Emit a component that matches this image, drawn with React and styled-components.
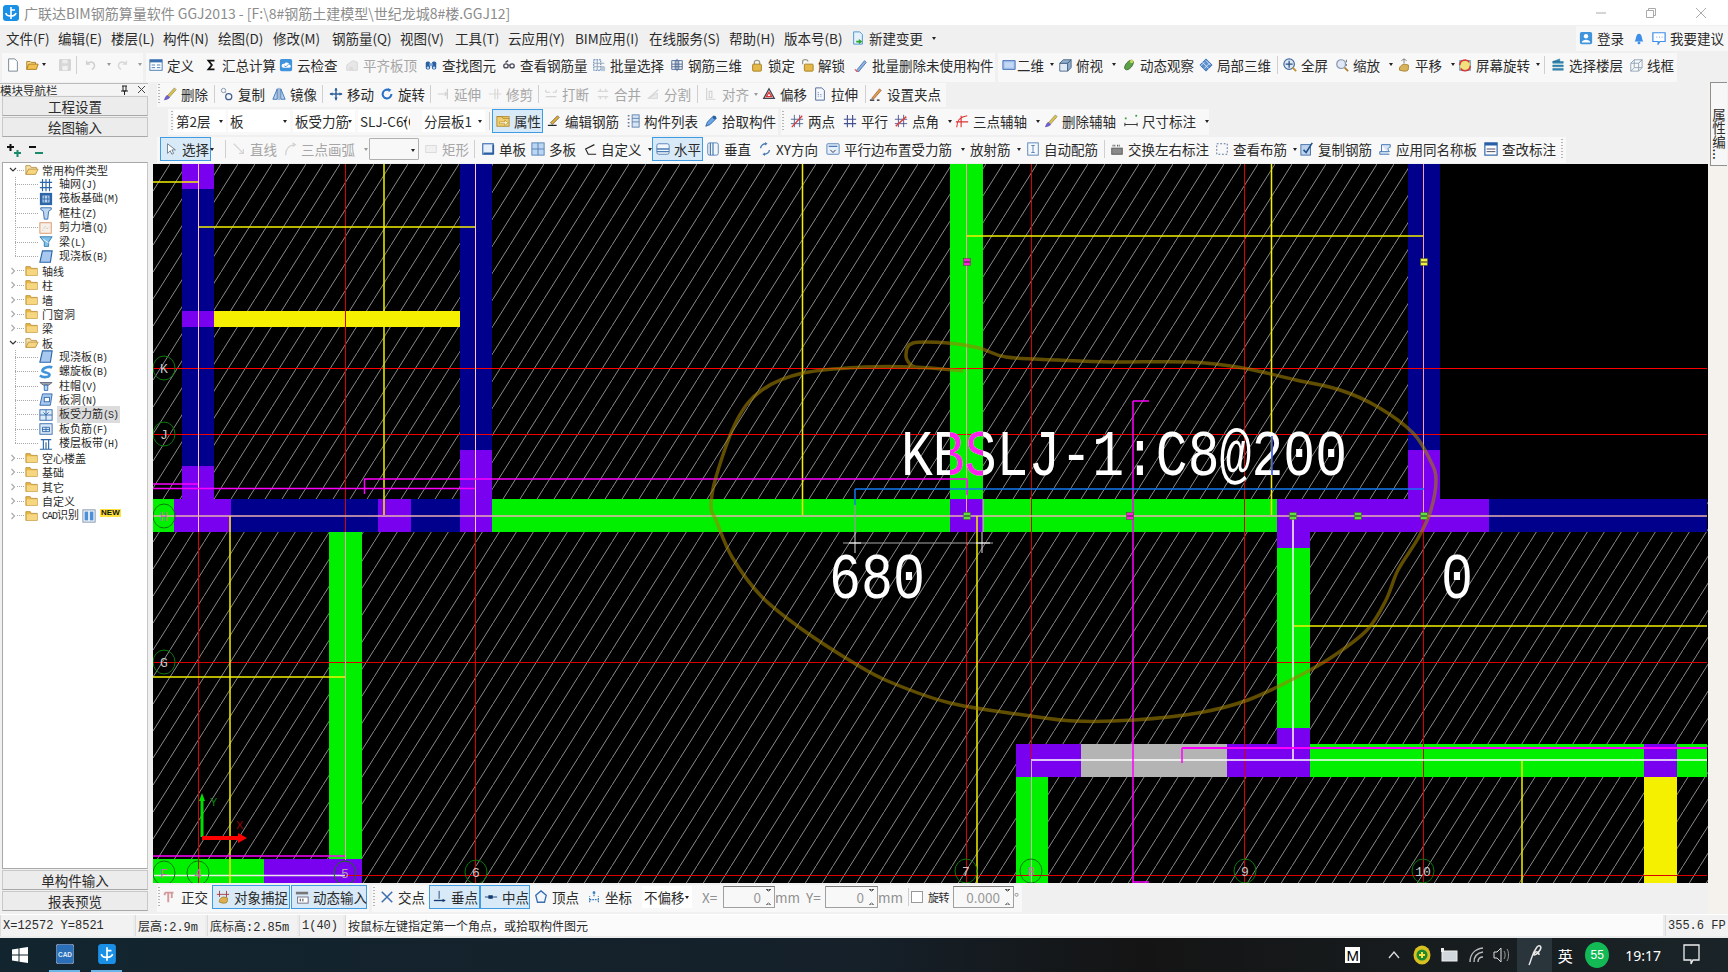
import React from "react";
import styled, { createGlobalStyle } from "styled-components";

const GlobalStyle = createGlobalStyle`
    html, body {
        margin: 0;
        padding: 0;
        background: #f0f0f0;
        overflow: hidden;
    }
    * {
        box-sizing: border-box;
    }
`;

// small bitmap-like toolbar icons, all on a 16 grid
const B = "#3a6fb0";
const LB = "#bcd6f2";
const ICONS = {
    new: <path d="M3 1h7l3 3v11H3z" fill="#fff" stroke="#6f7d8c" />,
    open: (<><path d="M2 13V4h4l1 1h5v2" fill="#f7dc8c" stroke="#a87818" /><path d="M2 13l2-6h11l-2 6z" fill="#f0c050" stroke="#a87818" /></>),
    save: (<><rect x="2" y="2" width="12" height="12" fill="#c4c4c4" stroke="#aaa" /><rect x="5" y="2" width="6" height="4" fill="#e6e6e6" /><rect x="5" y="9" width="6" height="5" fill="#eee" /></>),
    undo: <path d="M3 3v4h4M3 7c2-3 8-4 9 1 .4 2-1 4-3 5" fill="none" stroke="#b5b5b5" strokeWidth="1.6" />,
    redo: <path d="M13 3v4H9M13 7c-2-3-8-4-9 1-.4 2 1 4 3 5" fill="none" stroke="#c4c4c4" strokeWidth="1.6" />,
    define: (<><rect x="1" y="2" width="14" height="12" fill="#fff" stroke={B} /><rect x="1" y="2" width="14" height="3" fill={B} /><path d="M3 8h4M3 11h4M9 8h4M9 11h4" stroke={B} /></>),
    sigma: <path d="M12 3H5l4 5-4 5h7" fill="none" stroke="#111" strokeWidth="2" />,
    cloud: (<><rect x="1" y="1" width="14" height="14" rx="2" fill="#3f94dc" /><path d="M3 9c0-2 2-3 3-2 1-3 6-2 6 1 2 0 2 3 0 3H5c-1 0-2-1-2-2z" fill="#fff" /><path d="M6 9l2 1 3-3" fill="none" stroke="#3f94dc" /></>),
    align: (<><path d="M2 14V8l7-5 5 2v9z" fill="#ddd" stroke="#bbb" /><path d="M5 14v-4h4v4" fill="#c8c8c8" /></>),
    find: (<><rect x="2" y="4" width="5" height="9" rx="2" fill="#2c5fa0" /><rect x="9" y="4" width="5" height="9" rx="2" fill="#2c5fa0" /><rect x="6" y="6" width="4" height="3" fill="#7aa6d8" /><circle cx="4.5" cy="11" r="1.4" fill={LB} /><circle cx="11.5" cy="11" r="1.4" fill={LB} /></>),
    rebar: <path d="M2 9c0-3 5-3 5 0s-5 3-5 0zM9 9c0-3 5-3 5 0s-5 3-5 0M7 8l2 0M4 5l3-2" fill="none" stroke="#445" strokeWidth="1.4" />,
    batch: (<><rect x="2" y="2" width="8" height="12" fill="none" stroke={B} strokeDasharray="2 1" /><path d="M2 6h12M2 10h12M6 2v12" stroke="#8d9fb5" /><rect x="10" y="10" width="5" height="5" fill="#b9c6d8" /></>),
    r3d: <path d="M2 3h12v10H2zM2 7h12M2 10h12M6 3v10M10 3v10M8 1v14" fill="none" stroke="#43608f" />,
    lock: (<><path d="M5 8V5c0-3 6-3 6 0v3" fill="none" stroke="#998" strokeWidth="1.4" /><rect x="3" y="7" width="10" height="8" rx="1" fill="#e5b84a" stroke="#a07a1c" /></>),
    unlock: (<><path d="M3 7V4c0-3 6-3 6 0" fill="none" stroke="#998" strokeWidth="1.4" /><rect x="5" y="7" width="10" height="8" rx="1" fill="#e5b84a" stroke="#a07a1c" /></>),
    wand: (<><path d="M3 14l9-11 2 2-9 11z" fill="#8db3e6" stroke="#4a72a8" /><path d="M1 13l3 3" stroke="#d55" strokeWidth="1.4" /></>),
    plane: (<><path d="M1 3h14v10H1z" fill="#a8c6f0" stroke="#3a64b0" /><path d="M3 5h10v6H3z" fill="#c4d8f6" /></>),
    box: (<><path d="M2 6h9v9H2z" fill="#dfeaf6" stroke="#46617f" /><path d="M2 6l4-4h9l-4 4zM11 6l4-4v9l-4 4z" fill="#90b0d2" stroke="#46617f" /></>),
    orbit: (<><ellipse cx="8" cy="8" rx="3.5" ry="6.5" transform="rotate(40 8 8)" fill="#5ca04a" stroke="#3a7030" /><circle cx="11" cy="4" r="2" fill="#c5d850" /></>),
    cube: (<><path d="M8 1l7 7-7 7-7-7z" fill="#5b8fcf" stroke="#3a6fb0" /><path d="M4 5l7 7M8 3l5 5M2 9l4-4M6 12l6-6" stroke="#dfeaf6" /></>),
    full: (<><circle cx="7" cy="7" r="6" fill="#dfe8f4" stroke="#426b9f" strokeWidth="1.4" /><path d="M7 3v8M3 7h8" stroke="#2c4f80" strokeWidth="1.4" /><path d="M11 11l4 4" stroke="#c09030" strokeWidth="2" /></>),
    zoom: (<><circle cx="7" cy="7" r="5" fill="#dfe8f4" stroke="#8898ad" strokeWidth="1.4" /><path d="M11 11l4 4" stroke="#a88030" strokeWidth="2" /><path d="M13 2v3M13 7v2" stroke="#555" /></>),
    pan: (<><path d="M3 14c-1-4 2-6 5-7l5 1v4c0 3-2 3-5 3z" fill="#d9b35c" stroke="#a47f2e" /><path d="M8 1v5M5 3l3-2 3 2" fill="none" stroke="#777" /></>),
    rotate: (<><rect x="2" y="3" width="12" height="11" fill="#f3e17c" stroke="#4a90c8" /><path d="M2 8a6 6 0 0 1 11-3M14 9a6 6 0 0 1-11 3" fill="none" stroke="#d33" strokeWidth="1.6" /></>),
    floors: <path d="M2 4l8-3v3zM2 4h12v2H2zM2 8h12v2H2zM2 12h12v2H2z" fill="#2f8ab8" stroke="#1f6a8c" strokeWidth=".5" />,
    wire: <path d="M2 6h9v9H2zM2 6l4-4h9l-4 4M11 6l4-4v9l-4 4M6 2v9l-4 4M6 11h9" fill="none" stroke="#8da0b3" />,
    del: (<><path d="M5 10L13 1l2 2-8 9z" fill="#e0c040" stroke="#997" /><path d="M1 15c1-3 2-5 4-6l3 3c-2 2-4 3-7 3z" fill="#6d60c8" /></>),
    copy: (<><circle cx="4" cy="4" r="2.5" fill="none" stroke="#7d8ea3" /><circle cx="10" cy="11" r="3.5" fill="none" stroke="#43608f" strokeWidth="1.4" /><path d="M6 6l2 2" stroke="#888" strokeDasharray="1 1" /></>),
    mirror: <path d="M1 14L6 2v12zM15 14L10 2v12zM8 1v14" fill="#b7cfee" stroke={B} />,
    move: (<><path d="M8 1v14M1 8h14" stroke="#2c5f9c" strokeWidth="1.6" /><path d="M8 1l-2 3h4zM8 15l-2-3h4zM1 8l3-2v4zM15 8l-3-2v4z" fill="#2c5f9c" /></>),
    rot: (<><path d="M13 8a5 5 0 1 1-3-4.5" fill="none" stroke="#2b6fc6" strokeWidth="2.4" /><path d="M9 1l4 2-3 3z" fill="#2b6fc6" /></>),
    extend: <path d="M2 8h8M13 2v12M10 6l2 2-2 2" fill="none" stroke="#b5b5b5" strokeWidth="1.4" />,
    trim: <path d="M1 8h14M8 2v12M11 2v12" fill="none" stroke="#c4c4c4" strokeWidth="1.4" />,
    break: <path d="M2 6h5M10 6h4M2 11h12M2 6V3M14 6V3" fill="none" stroke="#bbb" strokeWidth="1.4" />,
    merge: <path d="M2 5h12M2 11h12M5 2v3M11 2v3M5 11v3M11 11v3" fill="none" stroke="#c4c4c4" strokeWidth="1.6" />,
    split: (<><path d="M2 13h11V7z" fill="#e4e4e4" stroke="#bbb" /><path d="M4 12l10-9" stroke="#bbb" strokeWidth="1.4" /></>),
    alignL: <path d="M3 1v14M3 14h10M6 5h3v7H6z" fill="none" stroke="#bbb" strokeWidth="1.3" />,
    offset: (<><path d="M2 13L8 2l6 11z" fill="none" stroke="#445" strokeWidth="1.5" /><path d="M5 11l3-5 3 5z" fill="none" stroke="#d33" strokeWidth="1.5" /></>),
    stretch: (<><path d="M3 1h7l3 3v11H3z" fill="#f5f8fc" stroke="#43608f" /><path d="M6 6v6M9 8v4" stroke="#43608f" strokeDasharray="1 1" /></>),
    gripset: (<><path d="M1 15h5M9 15h3" stroke="#111" strokeWidth="1.4" /><path d="M3 13L12 2l2 2-8 9z" fill="#dda040" stroke="#944" strokeWidth=".7" /></>),
    prop: (<><rect x="1" y="3" width="14" height="11" fill="#f0cd70" stroke="#b08a30" /><path d="M1 3h6l1 2h7" fill="none" stroke="#b08a30" /><path d="M4 9h6V7l4 3-4 3v-2H4z" fill="#fff6d0" stroke="#a07a1c" strokeWidth=".6" /></>),
    edit: (<><path d="M4 10L12 2l2 2-8 8z" fill="#e0b030" stroke="#765" /><path d="M1 13h10" stroke="#222" strokeWidth="1.4" /></>),
    list: (<><path d="M2 2h3M2 6h3M2 10h3M2 14h3" stroke="#6a7b90" strokeWidth="1.5" strokeDasharray="2 1" /><rect x="7" y="1" width="8" height="14" fill="#d6e4f4" stroke="#5a7fa8" /><path d="M7 5h8M7 9h8" stroke="#5a7fa8" /></>),
    pick: (<><path d="M2 14l2-5 7-7 3 3-7 7z" fill="#6aa6e8" stroke="#2c5fa0" /><circle cx="12" cy="4" r="2" fill="#2c5fa0" /></>),
    two: (<><path d="M1 6h14M1 11h14M5 1v14M11 1v14" stroke="#43608f" /><path d="M2 15L14 2" stroke="#d33" strokeWidth="1.4" /></>),
    para: <path d="M1 6h14M1 11h14M5 1v14M11 1v14" stroke="#43508f" strokeWidth="1.3" />,
    ptang: (<><path d="M1 6h14M1 11h14M5 1v14M11 1v14" stroke="#43508f" /><path d="M2 14L14 3" stroke="#e04040" strokeWidth="1.6" /></>),
    arc: <path d="M2 15C2 7 6 3 14 2M1 9h14M7 2v13" fill="none" stroke="#d33" strokeWidth="1.3" />,
    dim: (<><rect x="1" y="4" width="2" height="2" fill="#393" /><rect x="13" y="1" width="2" height="2" fill="#393" /><path d="M1 12h14M1 10v4M15 10v4" stroke="#222" /></>),
    select: <path d="M4 2v11l3-3 2 4 2-1-2-4h4z" fill="#fff" stroke="#678" />,
    line: <path d="M2 2l11 11M13 8v5H8" fill="none" stroke="#bbb" strokeWidth="1.3" />,
    arcLine: <path d="M3 15C3 8 6 4 13 3M11 1l3 2-3 2" fill="none" stroke="#bbb" strokeWidth="1.5" />,
    rect: <rect x="2" y="4" width="12" height="8" fill="#eee" stroke="#c4c4c4" />,
    slab: (<><rect x="2" y="2" width="12" height="12" fill="#e6f0fb" stroke={B} strokeWidth="1.3" /><path d="M3 13h11V3" stroke="#2c5fa0" strokeWidth="2" fill="none" /></>),
    multi: (<><rect x="1" y="1" width="14" height="14" fill={LB} stroke="#4d7cb4" /><path d="M8 1v14M1 8h14" stroke="#4d7cb4" /></>),
    custom: <path d="M13 3L3 8l3 6h9" fill="none" stroke="#222" strokeWidth="1.3" />,
    horiz: (<><rect x="1" y="2" width="14" height="12" rx="2" fill="#f2f7fc" stroke="#4d7cb4" /><path d="M1 8h14M1 11h14" stroke="#4d7cb4" strokeWidth="1.6" /></>),
    vert: (<><rect x="2" y="1" width="12" height="14" rx="2" fill="#f2f7fc" stroke="#4d7cb4" /><path d="M5 1v14M8 1v14" stroke="#4d7cb4" strokeWidth="1.4" /></>),
    xy: (<><path d="M3 7c0-3 3-5 6-5M13 9c0 3-3 5-6 5" fill="none" stroke="#4d7cb4" strokeWidth="1.6" /><path d="M8 0l3 2-3 2zM8 12l-3 2 3 2z" fill="#4d7cb4" /></>),
    parabar: (<><rect x="1" y="2" width="14" height="12" rx="1" fill="#e6f0fb" stroke="#4d7cb4" /><path d="M3 5h10" stroke="#4d7cb4" strokeWidth="1.5" /><path d="M5 9l3 3 3-3" fill="none" stroke="#223" /></>),
    auto: (<><rect x="2" y="1" width="12" height="14" fill="#f5f9fe" stroke="#4d7cb4" /><path d="M6 4h4M8 4v8M6 12h4" stroke="#4d7cb4" /></>),
    swap: (<><rect x="2" y="7" width="12" height="7" fill="#8a8a8a" stroke="#555" /><path d="M3 4h3M8 4h3" stroke="#444" strokeWidth="2" strokeDasharray="1 1" /></>),
    check: <rect x="2" y="2" width="12" height="12" fill="none" stroke="#43608f" strokeDasharray="2 2" />,
    copybar: (<><rect x="1" y="3" width="11" height="12" fill="#bdd2ec" stroke="#3d6ba4" /><path d="M4 9l3 3 7-11" fill="none" stroke="#1f4f8a" strokeWidth="1.8" /></>),
    same: <path d="M4 3h10v3c-3 0-3 3-1 5H2v3h11M4 3v8" fill="#d6e4f4" stroke="#3a6fb0" />,
    annot: (<><rect x="1" y="1" width="14" height="14" fill="#fff" stroke="#2a5fa8" strokeWidth="1.3" /><rect x="1" y="1" width="14" height="3" fill="#2a5fa8" /><path d="M3 8h10M3 11h10" stroke="#335" /></>),
    ortho: <path d="M2 3h10M6 3v11M10 3v6M2 3v3" fill="none" stroke="#d49a9a" strokeWidth="2.2" />,
    snap: (<><path d="M4 1v7M12 1v7M1 5h14" stroke="#a33" /><path d="M4 14c-1-3 2-6 5-6l4 1v3c0 3-2 3-5 3z" fill="#dcb050" stroke="#a47f2e" /></>),
    dyn: (<><rect x="1" y="2" width="14" height="3" fill="#777" /><rect x="3" y="8" width="12" height="7" fill="#fff" stroke="#667" /><path d="M6 10v3M9 10v3" stroke="#223" /></>),
    cross: <path d="M2 2l12 12M14 2L2 14" stroke="#3a6fb0" strokeWidth="1.7" />,
    perp: (<><path d="M1 12h13" stroke="#123a70" strokeWidth="1.5" /><path d="M7 1v9" stroke="#123a70" /><path d="M11 10l3 2-3 2z" fill="#123a70" /></>),
    mid: (<><path d="M1 8h14" stroke="#123a70" /><rect x="5" y="6" width="5" height="4" fill="#123a70" /></>),
    vertex: <path d="M8 1l6 5-2 8H4L2 6z" fill="#f2f7fc" stroke="#3a6fb0" strokeWidth="1.5" />,
    coord: (<><path d="M3 14V7M13 14V7M3 11h10M8 2v6" stroke="#3a7fc0" strokeWidth="1.4" strokeDasharray="2 1" /><circle cx="8" cy="3" r="1.6" fill="#3a7fc0" /></>),
    change: (<><path d="M3 1h7l3 3v11H3z" fill="#e5f2fb" stroke="#3f8fd0" /><path d="M9 9l4 3-4 3zM6 11h3v2H6z" fill="#2da52d" /></>),
    user: (<><rect x="1" y="1" width="14" height="14" rx="2" fill="#3f94dc" /><circle cx="8" cy="6" r="2.5" fill="#fff" /><path d="M3 13c1-4 9-4 10 0z" fill="#fff" /></>),
    bell: (<><path d="M3 12c2-2 1-9 5-9s3 7 5 9z" fill="#3f8ee8" /><circle cx="8" cy="13.6" r="1.6" fill="#3f8ee8" /></>),
    chat: (<><path d="M1 2h14v10H9l-2 3v-3H1z" fill="#fff" stroke="#3f8ee8" strokeWidth="1.4" /><path d="M5 7h1M8 7h1M11 7h1" stroke="#3f8ee8" /></>),
    folder: (<><path d="M1 3h5l1 2h7v8H1z" fill="#e8b840" stroke="#b89040" /><path d="M2 6h12v7H2z" fill="#f6d680" /></>),
    folderOpen: (<><path d="M1 13V3h5l1 2h6v2" fill="#f5e3ac" stroke="#b89040" /><path d="M1 13l3-6h11l-3 6z" fill="#f6d680" stroke="#b89040" /></>),
    grid: <path d="M1 5h14M1 11h14M4 1v14M8 1v14M12 1v14" stroke="#2d66a8" strokeWidth="1.3" />,
    raft: (<><rect x="1" y="1" width="14" height="14" fill="#2d66a8" /><rect x="4" y="4" width="8" height="8" fill="#bdd2ec" /><path d="M6 4v8M10 4v8M4 8h8" stroke="#2d66a8" /></>),
    column: <path d="M2 2h12v2l-3 2-1 9H6L5 6 2 4z" fill="#bcd6f2" stroke="#2d66a8" />,
    wall: (<><rect x="1" y="2" width="13" height="12" fill="#f7f0e8" stroke="#d89060" /><path d="M4 11l3-5 2 3 3-2" stroke="#bbb" fill="none" strokeDasharray="1 1" /></>),
    beam: (<><path d="M1 2h14l-4 6v5H6V8z" fill="#7ec0e8" stroke="#2d76a8" /><path d="M5 5l6 4" stroke="#fff" /></>),
    cast: <path d="M4 1h11l-2 13H1z" fill="#a8c8f0" stroke="#2d66a8" strokeWidth="1.3" />,
    spiral: <path d="M1 12c4 3 11 2 11-1S3 9 4 6s8-5 11-3" fill="none" stroke="#3f94dc" strokeWidth="3" />,
    cap: (<><path d="M1 4h14l-4 3H5z" fill="#9aa5b2" stroke="#667" /><path d="M6 7h4v6H6z" fill="#bcd6f2" stroke="#2d66a8" /></>),
    hole: (<><path d="M4 1h11l-2 13H1z" fill="#a8c8f0" stroke="#2d66a8" /><rect x="6" y="5" width="6" height="5" fill="#fff" stroke="#2d66a8" /></>),
    barS: (<><rect x="1" y="2" width="14" height="12" fill="#dce9f7" stroke="#2d66a8" /><path d="M1 8h14M8 2v12M5 5l3 3 3-3" fill="none" stroke="#2d66a8" /></>),
    barN: (<><rect x="1" y="2" width="14" height="12" fill="#dce9f7" stroke="#2d66a8" /><path d="M4 6h8v5H4zM4 8.5h8M8 6v5" fill="none" stroke="#2d66a8" /></>),
    band: <path d="M1 14h14M2 3h12M5 3v11M11 3v11M8 6v8" stroke="#2d66a8" strokeWidth="1.3" />,
    cad: (<><rect x="1" y="1" width="14" height="14" fill="#eef3fb" stroke="#7a8fa8" /><rect x="3" y="3" width="4" height="10" fill="#4d8fd8" /><rect x="9" y="3" width="4" height="10" fill="#4d8fd8" /></>),
};

const t = (i, label, w, opts = {}) => ({ i, label, w, ...opts });
const sep = (w) => ({ sep: true, w });
const grip = (w) => ({ grip: true, w });
const gap = (w) => ({ w });

const ROW_FILE = [
    t("new", "", 19), t("open", "", 33, { caret: true, cm: -1 }), t("save", "", 18, { off: true }),
    sep(8), t("undo", "", 31, { caret: true, off: true }), t("redo", "", 28, { caret: true, off: true }),
];
const ROW_CALC = [
    t("define", "定义", 55), t("sigma", "汇总计算", 75), t("cloud", "云检查", 66), t("align", "平齐板顶", 79, { off: true }),
    t("find", "查找图元", 78), t("rebar", "查看钢筋量", 90), t("batch", "批量选择", 78), t("r3d", "钢筋三维", 80),
    t("lock", "锁定", 50), t("unlock", "解锁", 54), t("wand", "批量删除未使用构件", 141),
];
const ROW_VIEW = [
    t("plane", "二维", 56, { caret: true, ig: 1 }), t("box", "俯视", 64, { caret: true }), t("orbit", "动态观察", 77), t("cube", "局部三维", 78),
    sep(6), t("full", "全屏", 52), t("zoom", "缩放", 62, { caret: true }), t("pan", "平移", 61, { caret: true }),
    t("rotate", "屏幕旋转", 86, { caret: true, cm: 2 }), sep(7), t("floors", "选择楼层", 78), t("wire", "线框", 48),
];
const ROW_EDIT = [
    grip(6), t("del", "删除", 51), sep(6), t("copy", "复制", 52), t("mirror", "镜像", 50), sep(7), t("move", "移动", 51),
    t("rot", "旋转", 50), sep(6), t("extend", "延伸", 52, { off: true }), t("trim", "修剪", 50, { off: true }), sep(6),
    t("break", "打断", 52, { off: true }), t("merge", "合并", 50, { off: true }), t("split", "分割", 51, { off: true }), sep(7),
    t("alignL", "对齐", 58, { off: true, caret: true, cm: 1 }), t("offset", "偏移", 51), t("stretch", "拉伸", 52), sep(4), t("gripset", "设置夹点", 77),
];
const ROW_PROP = [
    sep(3), t("prop", "属性", 51, { on: true }), gap(4), t("edit", "编辑钢筋", 79), t("list", "构件列表", 78), t("pick", "拾取构件", 74),
];
const ROW_AXIS = [
    grip(9), t("two", "两点", 53), t("para", "平行", 51), t("ptang", "点角", 61, { caret: true }), t("arc", "三点辅轴", 89, { caret: true }),
    t("del", "删除辅轴", 80), t("dim", "尺寸标注", 85, { caret: true }),
];
const ROW_DRAW_A = [
    gap(3), t("select", "选择", 51, { on: true }), t(null, "", 14, { caret: true, cm: -1 }), sep(7), t("line", "直线", 51, { off: true }),
    t("arcLine", "三点画弧", 86, { off: true, caret: true }),
];
const ROW_DRAW_B = [
    gap(5), t("rect", "矩形", 50, { off: true }), sep(7), t("slab", "单板", 50), t("multi", "多板", 52), t("custom", "自定义", 69, { caret: true, cm: 2 }),
    t("horiz", "水平", 51, { on: true }), gap(3), t("vert", "垂直", 52), t("xy", "XY方向", 68), t("parabar", "平行边布置受力筋", 144, { caret: true }),
    t(null, "放射筋", 56, { caret: true, cm: 2, noIcon: true }), t("auto", "自动配筋", 78), sep(6), t("swap", "交换左右标注", 105),
    t("check", "查看布筋", 85, { caret: true, cm: 2 }), t("copybar", "复制钢筋", 78), t("same", "应用同名称板", 106), t("annot", "查改标注", 76),
];
const SNAP_A = [
    grip(6), t("ortho", "正交", 49), t("snap", "对象捕捉", 78, { on: true }), gap(1), t("dyn", "动态输入", 76, { on: true }), gap(2),
];
const SNAP_B = [
    grip(8), t("cross", "交点", 49), t("perp", "垂点", 51, { on: true }), t("mid", "中点", 50, { on: true }), gap(4),
    t("vertex", "顶点", 53), t("coord", "坐标", 53), gap(2),
];

const MENU = [
    ["文件(F)", 52], ["编辑(E)", 53], ["楼层(L)", 52], ["构件(N)", 55], ["绘图(D)", 55], ["修改(M)", 59], ["钢筋量(Q)", 68],
    ["视图(V)", 55], ["工具(T)", 53], ["云应用(Y)", 67], ["BIM应用(I)", 74], ["在线服务(S)", 80], ["帮助(H)", 55], ["版本号(B)", 67],
];

const TREE = [
    { folder: true, open: true, label: "常用构件类型" },
    { i: "grid", label: "轴网", key: "(J)" }, { i: "raft", label: "筏板基础", key: "(M)" }, { i: "column", label: "框柱", key: "(Z)" },
    { i: "wall", label: "剪力墙", key: "(Q)" }, { i: "beam", label: "梁", key: "(L)" }, { i: "cast", label: "现浇板", key: "(B)", last: true },
    { folder: true, label: "轴线" }, { folder: true, label: "柱" }, { folder: true, label: "墙" }, { folder: true, label: "门窗洞" }, { folder: true, label: "梁" },
    { folder: true, open: true, label: "板" },
    { i: "cast", label: "现浇板", key: "(B)" }, { i: "spiral", label: "螺旋板", key: "(B)" }, { i: "cap", label: "柱帽", key: "(V)" },
    { i: "hole", label: "板洞", key: "(N)" }, { i: "barS", label: "板受力筋", key: "(S)", sel: true }, { i: "barN", label: "板负筋", key: "(F)" },
    { i: "band", label: "楼层板带", key: "(H)", last: true },
    { folder: true, label: "空心楼盖" }, { folder: true, label: "基础" }, { folder: true, label: "其它" }, { folder: true, label: "自定义" },
    { folder: true, label: "识别", prefix: "CAD", cad: true },
];

const GREEN = "#00f000";
const NAVY = "#00008c";
const PURPLE = "#7a00f0";
const YELLOW = "#f5f000";
const GREY = "#b4b4b4";

const WALLS = [
    [182, 164, 32, 25, PURPLE], [182, 189, 32, 122, NAVY], [182, 311, 32, 16, PURPLE], [182, 327, 32, 139, NAVY], [182, 466, 32, 33, PURPLE],
    [214, 311, 246, 16, YELLOW],
    [460, 164, 32, 286, NAVY], [460, 450, 32, 49, PURPLE],
    [950, 164, 33, 335, GREEN], [1408, 164, 32, 286, NAVY], [1408, 450, 32, 49, PURPLE],
    [153, 499, 21, 33, GREEN], [174, 499, 57, 33, PURPLE], [231, 499, 147, 33, NAVY], [378, 499, 33, 33, PURPLE], [411, 499, 49, 33, NAVY],
    [460, 499, 32, 33, PURPLE], [492, 499, 458, 33, GREEN], [950, 499, 33, 33, PURPLE], [983, 499, 294, 33, GREEN],
    [1277, 499, 212, 33, PURPLE], [1489, 499, 218, 33, NAVY],
    [1277, 532, 33, 16, PURPLE], [1277, 548, 33, 180, GREEN], [1277, 728, 33, 16, PURPLE],
    [1016, 744, 65, 33, PURPLE], [1081, 744, 146, 33, GREY], [1227, 744, 83, 33, PURPLE], [1310, 744, 334, 33, GREEN],
    [1644, 744, 33, 33, PURPLE], [1677, 744, 30, 33, GREEN],
    [1016, 777, 32, 106, GREEN], [1644, 777, 33, 106, YELLOW],
    [329, 532, 33, 327, GREEN], [153, 859, 111, 24, GREEN], [264, 859, 98, 24, PURPLE],
];

// x1 y1 x2 y2 colour width
const LINES = [
    [153, 368.5, 1707, 368.5, "#ff0000"], [153, 434.5, 1707, 434.5, "#f00000"], [153, 662.5, 1707, 662.5, "#d80000"], [153, 875.5, 1707, 875.5, "#d80000"],
    [198.5, 532, 198.5, 883, "#d80000"], [345.5, 164, 345.5, 532, "#d80000"], [475.5, 532, 475.5, 883, "#d80000"], [966.5, 532, 966.5, 883, "#d80000"],
    [1031.5, 164, 1031.5, 760, "#d80000"], [1244.5, 164, 1244.5, 883, "#d80000"], [1423.5, 516, 1423.5, 883, "#d80000"],
    [198.5, 164, 198.5, 532, "#ffc8d0"], [475.5, 164, 475.5, 532, "#ffc8d0"], [966.5, 164, 966.5, 516, "#f8a0a8"], [1423.5, 164, 1423.5, 516, "#f8a0a8"],
    [153, 516, 1707, 516, "#e8b0b0", 1.5], [345.5, 532, 345.5, 860, "#e8a0b8"],
    [153, 875.5, 345, 875.5, "#f0e8e8", 1.5], [1293, 516, 1293, 760, "#ffffff", 1.5], [1031, 760, 1707, 760, "#ffffff", 1.5], [1031.5, 760, 1031.5, 883, "#c8b0b8"],
    [153, 182, 198, 182, YELLOW, 1.5], [199, 227, 475, 227, YELLOW, 1.5], [384, 164, 384, 515, YELLOW, 1.5], [802.5, 164, 802.5, 515, YELLOW, 1.5],
    [230, 516, 230, 883, YELLOW, 1.5], [153, 677, 345, 677, YELLOW, 1.5], [967, 236, 1423, 236, YELLOW, 1.5], [1271.5, 164, 1271.5, 515, YELLOW, 1.5],
    [977, 516, 977, 883, YELLOW, 1.5], [1294, 626, 1707, 626, YELLOW, 1.5], [1522, 761, 1522, 883, YELLOW, 1.5],
    [153, 484, 198, 484, "#ff00ff", 1.5], [153, 488.5, 475, 488.5, "#ff00ff", 1.5], [364.5, 479, 364.5, 494, "#ff00ff", 1.5], [364, 479, 967, 479, "#ff00ff", 1.5],
    [967, 479, 967, 495, "#ff00ff", 1.5], [1133, 401, 1133, 883, "#ff00ff", 1.5], [1133, 401, 1149, 401, "#ff00ff", 1.5], [1133, 882, 1149, 882, "#ff00ff", 1.5],
    [1182, 748, 1707, 748, "#ff00ff", 2], [1182, 748, 1182, 763, "#ff00ff", 1.5], [153, 856, 345, 856, "#ff00ff", 1.5],
    [855, 489, 1424, 489, "#1478f0", 1.5], [855, 489, 855, 505, "#1478f0", 1.5], [855, 505, 855, 532, "#c080c0"], [983, 499, 983, 532, "#f0a0e0"],
    [843, 543, 993, 543, "#a8a8a8"], [855, 532, 855, 553, "#e0e0e0"], [982, 532, 982, 553, "#e0e0e0"],
];

const BUBBLES = [
    ["K", 164, 368], ["J", 164, 434], ["H", 164, 516, "#c070b0"], ["G", 164, 662], ["F", 164, 873, "#c070b0"], ["4", 198, 873, "#c070b0"],
    ["5", 345, 873, "#b0a0b0"], ["6", 476, 872], ["7", 966, 871], ["8", 1031, 871, "#c070b0"], ["9", 1245, 871], ["10", 1423, 871],
];

const GRIPS = [
    [967, 516, "#60e040"], [1130, 516, "#ff20e0"], [1293, 516, "#60e040"], [1358, 516, "#60e040"], [1424, 516, "#60e040"],
    [967, 262, "#ff20e0"], [1424, 262, "#f0f040"],
];

const CURVE = [
    [963, 371], [915, 367], [864, 367], [803, 373], [762, 390], [737, 420], [716, 477], [711, 507], [716, 520], [732, 557], [762, 597], [803, 630],
    [854, 663], [890, 682], [950, 703], [1024, 715], [1074, 721], [1134, 720], [1198, 713], [1248, 700], [1297, 677], [1332, 657], [1367, 630],
    [1386, 600], [1398, 570], [1417, 540], [1430, 513], [1436, 480], [1430, 460], [1413, 433], [1378, 407], [1340, 390], [1296, 380], [1243, 368],
    [1190, 362], [1111, 362], [1058, 360], [1006, 357], [979, 348], [948, 343], [913, 343], [906, 355], [911, 365], [920, 368],
];

// catmull-rom through the traced points
const smooth = (p) => {
    let d = `M${p[0][0]} ${p[0][1]}`;
    for (let n = 0; n < p.length - 1; n++) {
        const a = p[n - 1] || p[n];
        const b = p[n];
        const c = p[n + 1];
        const e = p[n + 2] || c;
        d += `C${b[0] + (c[0] - a[0]) / 6} ${b[1] + (c[1] - a[1]) / 6} ${c[0] - (e[0] - b[0]) / 6} ${c[1] - (e[1] - b[1]) / 6} ${c[0]} ${c[1]}`;
    }
    return d;
};

const Drawing = () => (
    <CanvasSvg viewBox="153 164 1555 719" width="1555" height="719">
        <defs>
            <pattern id="hatch" x="153" y="164" width="17" height="27" patternUnits="userSpaceOnUse">
                <path d="M0 27L17 0" stroke="#8a8a8a" strokeWidth="1" />
            </pattern>
            <clipPath id="overGreen">
                <rect x="950" y="420" width="33" height="70" />
            </clipPath>
        </defs>
        <rect x="153" y="164" width="1555" height="719" fill="#000" />
        <rect x="153" y="164" width="1555" height="719" fill="url(#hatch)" />
        <rect x="1440" y="164" width="268" height="335" fill="#000" />
        {WALLS.map(([x, y, w, h, c], n) => (
            <rect key={n} x={x} y={y} width={w} height={h} fill={c} shapeRendering="crispEdges" />
        ))}
        {LINES.map(([x1, y1, x2, y2, c, w], n) => (
            <line key={n} x1={x1} y1={y1} x2={x2} y2={y2} stroke={c} strokeWidth={w || 1} />
        ))}
        {BUBBLES.map(([s, x, y, c]) => (
            <g key={s}>
                <ellipse cx={x} cy={y} rx="11" ry="12" fill="none" stroke="#0a7a0a" />
                <text x={x} y={y + 5} textAnchor="middle" fontFamily="Liberation Mono, monospace" fontSize="13" fill={c || "#c8c8c8"}>{s}</text>
            </g>
        ))}
        <g fontFamily="Liberation Mono, monospace" fontSize="64" fill="#fff">
            <text x="901" y="475" textLength="446" lengthAdjust="spacingAndGlyphs">KBSLJ-1:C8@200</text>
            <text x="901" y="475" textLength="446" lengthAdjust="spacingAndGlyphs" fill="#ff20f0" clipPath="url(#overGreen)">KBSLJ-1:C8@200</text>
            <text x="829" y="598" textLength="96" lengthAdjust="spacingAndGlyphs">680</text>
            <text x="1441" y="598" textLength="32" lengthAdjust="spacingAndGlyphs">0</text>
        </g>
        <line x1="1272" y1="436" x2="1272" y2="475" stroke="#2040ff" strokeWidth="1.5" />
        <line x1="849" y1="543" x2="861" y2="543" stroke="#fff" />
        <line x1="976" y1="543" x2="990" y2="543" stroke="#fff" />
        {GRIPS.map(([x, y, c], n) => (
            <g key={n}>
                <rect x={x - 3.5} y={y - 3.5} width="7" height="7" fill={c} stroke="#405020" strokeWidth=".5" />
                <line x1={x - 3} y1={y} x2={x + 3} y2={y} stroke="#222" />
            </g>
        ))}
        <path d={smooth(CURVE)} fill="none" stroke="#a08000" strokeOpacity=".6" strokeWidth="3.5" />
        <path d="M202 837V800" stroke="#00e000" strokeWidth="3" />
        <path d="M202 793l-3 8h6z" fill="#00e000" />
        <path d="M202 838h36" stroke="#ff0000" strokeWidth="4" />
        <path d="M247 838l-9-5v10z" fill="#ff0000" />
        <text x="210" y="806" fontFamily="Liberation Sans, sans-serif" fontSize="11" fill="#0a8a0a">Y</text>
        <text x="236" y="829" fontFamily="Liberation Sans, sans-serif" fontSize="11" fill="#a00000">X</text>
    </CanvasSvg>
);

const Icon = ({ name, size = 14 }) => (
    <IconBox width={size} height={size} viewBox="0 0 16 16">{ICONS[name]}</IconBox>
);

const Tools = ({ items }) =>
    items.map((it, n) => {
        if (it.sep) return <Sep key={n} $w={it.w} />;
        if (it.grip) return <Grip key={n} $w={it.w} />;
        return (
            <Tool key={n} $w={it.w} $off={it.off} $on={it.on} $ig={it.ig}>
                {it.i && <Icon name={it.i} />}
                {it.label && <span>{it.label}</span>}
                {it.caret && <Caret $m={it.cm ?? 5} $off={it.off} />}
            </Tool>
        );
    });

const TreeRow = ({ row }) =>
    row.folder ? (
        <Node>
            <Chevron viewBox="0 0 8 8" width="8" height="8">
                <path d={row.open ? "M1 2l3 3 3-3" : "M2.5 1l3 3-3 3"} fill="none" stroke={row.open ? "#333" : "#aaa"} strokeWidth="1.2" />
            </Chevron>
            <Stub />
            <Icon name={row.open ? "folderOpen" : "folder"} />
            <FolderText>
                {row.prefix && <Mono>{row.prefix}</Mono>}
                {row.label}
            </FolderText>
            {row.cad && (
                <>
                    <CadIcon><Icon name="cad" /></CadIcon>
                    <NewBadge>NEW</NewBadge>
                </>
            )}
        </Node>
    ) : (
        <Node>
            <Elbow $last={row.last} />
            <Icon name={row.i} />
            <NodeText $sel={row.sel}>
                {row.label}
                <Mono>{row.key}</Mono>
            </NodeText>
        </Node>
    );

const App = () => {
    return (
        <Page>
            <GlobalStyle />
            <TitleBar>
                <AppLogo viewBox="0 0 16 16">
                    <rect width="16" height="16" rx="3" fill="#1a8fe6" />
                    <path d="M8 2v12M3 8c0 4 9 4 10 0M8 5h4" fill="none" stroke="#fff" strokeWidth="1.6" />
                </AppLogo>
                <TitleText>广联达BIM钢筋算量软件 GGJ2013 - [F:\8#钢筋土建模型\世纪龙城8#楼.GGJ12]</TitleText>
                <WindowBtns>
                    <svg width="10" height="10" viewBox="0 0 10 10"><path d="M0 5h10" stroke="#aaa" /></svg>
                    <svg width="10" height="10" viewBox="0 0 10 10"><path d="M.5 2.5h7v7h-7zM2.5 2V.5h7v7H8" fill="none" stroke="#aaa" /></svg>
                    <svg width="10" height="10" viewBox="0 0 10 10"><path d="M0 0l10 10M10 0L0 10" stroke="#aaa" /></svg>
                </WindowBtns>
            </TitleBar>

            <MenuBar>
                {MENU.map(([label, w]) => (
                    <MenuItem key={label} $w={w}>{label}</MenuItem>
                ))}
                <Tool $w={92}>
                    <Icon name="change" />
                    <span>新建变更</span>
                    <Caret $m={5} />
                </Tool>
                <Account>
                    <Icon name="user" />
                    <span>登录</span>
                    <BellWrap><Icon name="bell" /></BellWrap>
                    <Icon name="chat" />
                    <span>我要建议</span>
                </Account>
            </MenuBar>

            <TopRow>
                <Group $pl={4} $pb={6}><Tools items={ROW_FILE} /></Group>
                <Group $pl={3} $pb={6}><Tools items={ROW_CALC} /></Group>
                <Group $pl={4} $pb={6}><Tools items={ROW_VIEW} /></Group>
            </TopRow>

            <Body>
                <Nav>
                    <NavHeader>
                        <span>模块导航栏</span>
                        <NavHeaderBtns>
                            <svg width="9" height="10" viewBox="0 0 9 10"><path d="M2 1h5M3 1v5h3V1M1 6h7M4.5 6v4" fill="none" stroke="#222" /></svg>
                            <svg width="9" height="9" viewBox="0 0 9 9"><path d="M1 1l7 7M8 1L1 8" stroke="#444" /></svg>
                        </NavHeaderBtns>
                    </NavHeader>
                    <NavButton>工程设置</NavButton>
                    <NavButton>绘图输入</NavButton>
                    <TreeTools>
                        <svg width="16" height="16" viewBox="0 0 16 16"><path d="M1 5h7M4.5 2v7" stroke="#111" strokeWidth="2" /><path d="M8 11h7M11.5 8v7" stroke="#1a8a6a" strokeWidth="2" /></svg>
                        <svg width="16" height="12" viewBox="0 0 16 12"><path d="M1 3h7" stroke="#111" strokeWidth="2" /><path d="M7 9h8" stroke="#1a8a6a" strokeWidth="2" /></svg>
                    </TreeTools>
                    <TreePanel>
                        {TREE.map((row, n) => (
                            <TreeRow key={n} row={row} />
                        ))}
                    </TreePanel>
                    <NavButton>单构件输入</NavButton>
                    <NavButton>报表预览</NavButton>
                </Nav>

                <Main>
                    <ToolRow $h={26} $pl={4}>
                        <Group $pb={2}><Tools items={ROW_EDIT} /></Group>
                    </ToolRow>
                    <ToolRow $h={28} $pl={15}>
                        <Group $pl={2} $pb={2}>
                            <Grip $w={4} />
                            <PickBox $w={52} $mr={2}>第2层</PickBox>
                            <PickBox $w={62} $mr={3}>板</PickBox>
                            <PickBox $w={62} $mr={3}>板受力筋</PickBox>
                            <PickBox $w={52} $mr={12}>SLJ-C6(C</PickBox>
                            <PickBox $w={63} $mr={4}>分层板1</PickBox>
                            <Tools items={ROW_PROP} />
                        </Group>
                        <Group $pb={2}><Tools items={ROW_AXIS} /></Group>
                    </ToolRow>
                    <ToolRow $h={28} $pl={4}>
                        <Group $pb={2}>
                            <Tools items={ROW_DRAW_A} />
                            <Combo $w={50} />
                            <Tools items={ROW_DRAW_B} />
                            <Grip $w={6} />
                        </Group>
                    </ToolRow>
                    <Drawing />
                    <SnapRow>
                        <Group $pb={3}><Tools items={SNAP_A} /></Group>
                        <Group $pb={3}>
                            <Tools items={SNAP_B} />
                            <PickBox $w={50} $mr={10}>不偏移</PickBox>
                            <FieldLabel $w={21}>X=</FieldLabel>
                            <Spin $w={52}>0<SpinArrows /></Spin>
                            <FieldLabel $w={31}>mm</FieldLabel>
                            <FieldLabel $w={19}>Y=</FieldLabel>
                            <Spin $w={53}>0<SpinArrows /></Spin>
                            <FieldLabel $w={30}>mm</FieldLabel>
                            <Sep $w={3} />
                            <CheckBox />
                            <RotateLabel>旋转</RotateLabel>
                            <Spin $w={61}>0.000<SpinArrows /></Spin>
                            <FieldLabel $w={8}>°</FieldLabel>
                        </Group>
                    </SnapRow>
                </Main>

                <Rail>
                    <RailTab>属性编...</RailTab>
                </Rail>
            </Body>

            <StatusBar>
                <StatusCell $w={133}>X=12572 Y=8521</StatusCell>
                <StatusCell $w={70}>层高:2.9m</StatusCell>
                <StatusCell $w={90}>底标高:2.85m</StatusCell>
                <StatusCell $w={44}>1(40)</StatusCell>
                <StatusCell $grow>按鼠标左键指定第一个角点，或拾取构件图元</StatusCell>
                <StatusCell $w={63}>355.6 FP</StatusCell>
            </StatusBar>

            <Taskbar>
                <TaskLeft>
                    <svg width="16" height="16" viewBox="0 0 16 16"><path d="M0 2.5l6.500-1v6H0zM7.500 1.300L16 0v7.500H7.500zM0 8.500h6.500v6l-6.500-1zM7.500 8.500H16V16l-8.500-1.300z" fill="#fff" /></svg>
                    <TaskApp $ml={21}>
                        <svg width="18" height="20" viewBox="0 0 18 20"><rect width="18" height="20" rx="3" fill="#2a6fb8" stroke="#99a" /><text x="9" y="13" textAnchor="middle" fontFamily="Liberation Sans, sans-serif" fontSize="6.5" fontWeight="700" fill="#dfe8f4">CAD</text></svg>
                    </TaskApp>
                    <TaskApp $ml={11}>
                        <svg width="18" height="20" viewBox="0 0 16 18"><rect width="16" height="18" rx="3" fill="#1a8fe6" /><path d="M8 3v12M3 9c0 4 9 4 10 0M8 6h4" fill="none" stroke="#fff" strokeWidth="1.5" /></svg>
                    </TaskApp>
                </TaskLeft>
                <Tray>
                    <ImeBox>M</ImeBox>
                    <TrayIcon $ml={28} width="12" height="8" viewBox="0 0 12 8"><path d="M1 7l5-6 5 6" fill="none" stroke="#ddd" strokeWidth="1.3" /></TrayIcon>
                    <TrayIcon $ml={13} width="18" height="20" viewBox="0 0 18 20"><ellipse cx="9" cy="10" rx="8.5" ry="9.5" fill="#d8c020" /><circle cx="9" cy="10" r="5.5" fill="#1d8a30" /><path d="M9 7v6M6 10h6" stroke="#ffe040" strokeWidth="2" /></TrayIcon>
                    <TrayIcon $ml={9} width="18" height="16" viewBox="0 0 18 16"><rect x="2" y="4" width="15" height="10" fill="#d0d8de" stroke="#eee" /><rect x="1" y="1" width="3" height="4" fill="#eee" /></TrayIcon>
                    <TrayIcon $ml={10} width="18" height="18" viewBox="0 0 18 18"><path d="M2 16c0-8 5-13 13-14M6 16c0-5 3-9 9-10M10 16c0-3 2-5 5-5" fill="none" stroke="#bbb" strokeWidth="1.4" /></TrayIcon>
                    <TrayIcon $ml={6} width="18" height="18" viewBox="0 0 18 18"><path d="M2 6h3l4-4v14l-4-4H2z" fill="none" stroke="#ddd" /><path d="M12 5c1.500 2 1.500 6 0 8M15 3c2 3 2 9 0 12" fill="none" stroke="#999" /></TrayIcon>
                    <PenSlot>
                        <svg width="18" height="24" viewBox="0 0 18 24"><path d="M3 22c3-6 2-10 8-18 3-3 5 0 3 3-3 5-7 6-6 4 1-3 5-3 5 1" fill="none" stroke="#e8e8e8" strokeWidth="1.5" /></svg>
                    </PenSlot>
                    <TrayText $w={26}>英</TrayText>
                    <Badge>55</Badge>
                    <Clock>19:17</Clock>
                    <TrayIcon $ml={22} width="17" height="22" viewBox="0 0 17 22"><path d="M1 1h15v15h-6l-2 4v-4H1z" fill="none" stroke="#eee" strokeWidth="1.3" /></TrayIcon>
                </Tray>
            </Taskbar>
        </Page>
    );
};

export default App;

const FONT = `"Noto Sans CJK SC", "Noto Sans", sans-serif`;

const Page = styled.div`
    width: 1728px;
    height: 972px;
    display: flex;
    flex-direction: column;
    background: #f0f0f0;
    font-family: ${FONT};
    font-size: 13.5px;
    color: #2b2b2b;
    overflow: hidden;
`;
const TitleBar = styled.div`
    height: 25px;
    flex: none;
    display: flex;
    align-items: center;
    padding-left: 3px;
    background: #fff;
`;
const AppLogo = styled.svg`
    width: 16px;
    height: 16px;
`;
const TitleText = styled.span`
    margin-left: 5px;
    font-size: 14px;
    color: #8c8c8c;
    white-space: nowrap;
`;
const WindowBtns = styled.div`
    margin-left: auto;
    width: 132px;
    display: flex;
    justify-content: space-between;
    padding-right: 22px;
`;
const MenuBar = styled.div`
    height: 28px;
    flex: none;
    display: flex;
    align-items: center;
    padding: 0 0 2px 6px;
`;
const MenuItem = styled.span`
    width: ${(p) => p.$w}px;
    flex: none;
    white-space: nowrap;
`;
const Account = styled.div`
    margin-left: auto;
    width: 152px;
    height: 25px;
    display: flex;
    align-items: center;
    gap: 4px;
    padding-left: 3px;
    background: #f7f7f7;
`;
const BellWrap = styled.span`
    display: flex;
    margin: 0 2px 0 4px;
`;
const TopRow = styled.div`
    height: 29px;
    flex: none;
    display: flex;
    gap: 3px;
    padding: 0 0 0 2px;
    align-items: stretch;
`;
const Group = styled.div`
    display: flex;
    align-items: center;
    flex: none;
    padding-left: ${(p) => p.$pl || 0}px;
    padding-bottom: ${(p) => p.$pb || 0}px;
    background: #f8f8f8;
`;
const Tool = styled.div`
    width: ${(p) => p.$w}px;
    flex: none;
    display: flex;
    align-items: center;
    gap: ${(p) => (p.$ig !== undefined ? p.$ig : 4)}px;
    height: ${(p) => (p.$on ? "24px" : "auto")};
    padding-left: ${(p) => (p.$on ? "3px" : 0)};
    border: ${(p) => (p.$on ? "1px solid #3d9ce4" : "none")};
    background: ${(p) => (p.$on ? "#d8e9f7" : "transparent")};
    color: ${(p) => (p.$off ? "#a6a6a6" : "inherit")};
    white-space: nowrap;
    & > svg {
        opacity: ${(p) => (p.$off ? 0.6 : 1)};
    }
`;
const IconBox = styled.svg`
    flex: none;
    display: block;
`;
const Caret = styled.i`
    width: 0;
    height: 0;
    flex: none;
    margin-left: ${(p) => p.$m}px;
    border-left: 2.5px solid transparent;
    border-right: 2.5px solid transparent;
    border-top: 3px solid ${(p) => (p.$off ? "#999" : "#222")};
`;
const Sep = styled.span`
    width: ${(p) => p.$w}px;
    flex: none;
    height: 18px;
    background: linear-gradient(#cfcfcf, #cfcfcf) left center / 1px 100% no-repeat;
`;
const Grip = styled.span`
    width: ${(p) => p.$w}px;
    flex: none;
    height: 20px;
    background: repeating-linear-gradient(#b5b5b5 0 1px, transparent 1px 3px) 1px 0 / 2px 100% no-repeat;
`;
const Body = styled.div`
    height: 832px;
    flex: none;
    display: flex;
`;
const Nav = styled.div`
    width: 153px;
    flex: none;
    display: flex;
    flex-direction: column;
    padding: 1px 5px 2px 2px;
`;
const NavHeader = styled.div`
    height: 12px;
    margin: 0 0 1px -2px;
    display: flex;
    align-items: center;
    justify-content: space-between;
    font-size: 11.5px;
    line-height: 12px;
    border-top: 1px solid #bbb;
    background: #f4f4f4;
`;
const NavHeaderBtns = styled.span`
    display: flex;
    align-items: center;
    gap: 8px;
    padding-right: 2px;
`;
const NavButton = styled.div`
    height: 20px;
    flex: none;
    display: flex;
    align-items: center;
    justify-content: center;
    margin-bottom: 1px;
    border: 1px solid #c8c8c8;
    border-bottom-color: #a8a8a8;
    background: #ececec;
    font-size: 13.5px;
`;
const TreeTools = styled.div`
    height: 24px;
    flex: none;
    display: flex;
    align-items: center;
    gap: 6px;
    padding-left: 4px;
`;
const TreePanel = styled.div`
    flex: 1;
    margin-bottom: 1px;
    background: #fff;
    border: 1px solid #a8a8a8;
    border-right-color: #c8c8c8;
`;
const Node = styled.div`
    height: 14.4px;
    display: flex;
    align-items: center;
    font-size: 11px;
    line-height: 14px;
`;
const Chevron = styled.svg`
    margin-left: 6px;
    flex: none;
`;
const Stub = styled.span`
    width: 7px;
    flex: none;
    border-bottom: 1px dotted #aaa;
    margin-right: 1px;
`;
const Elbow = styled.span`
    width: 24px;
    height: 100%;
    margin-left: 12px;
    flex: none;
    background:
        repeating-linear-gradient(#aaa 0 1px, transparent 1px 2px) left top / 1px ${(p) => (p.$last ? "50%" : "100%")} no-repeat,
        repeating-linear-gradient(90deg, #aaa 0 1px, transparent 1px 2px) left center / 100% 1px no-repeat;
`;
const NodeText = styled.span`
    margin-left: 4px;
    padding: 0 2px;
    white-space: nowrap;
    background: ${(p) => (p.$sel ? "#dcdcdc" : "transparent")};
`;
const FolderText = styled.span`
    margin-left: 3px;
    white-space: nowrap;
`;
const Mono = styled.span`
    font-family: "Liberation Mono", monospace;
    font-size: 10px;
    letter-spacing: -1px;
`;
const CadIcon = styled.span`
    display: flex;
    margin-left: 3px;
`;
const NewBadge = styled.span`
    margin: -5px 0 0 4px;
    padding: 0 1px;
    font-family: "Liberation Sans", sans-serif;
    font-size: 8px;
    font-weight: 700;
    line-height: 8px;
    color: #111;
    background: #ffe23c;
`;
const Main = styled.div`
    width: 1555px;
    flex: none;
    display: flex;
    flex-direction: column;
`;
const ToolRow = styled.div`
    height: ${(p) => p.$h}px;
    flex: none;
    display: flex;
    gap: 3px;
    padding: 1px 0 1px ${(p) => p.$pl}px;
`;
const PickBox = styled.div`
    width: ${(p) => p.$w}px;
    margin-right: ${(p) => p.$mr}px;
    flex: none;
    height: 22px;
    position: relative;
    display: flex;
    align-items: center;
    padding: 0 12px 0 2px;
    background: #fff;
    overflow: hidden;
    white-space: nowrap;
    &::after {
        content: "";
        position: absolute;
        right: 3px;
        top: 10px;
        border-left: 2.5px solid transparent;
        border-right: 2.5px solid transparent;
        border-top: 3px solid #222;
    }
`;
const Combo = styled(PickBox)`
    height: 22px;
    margin-right: 0;
    border: 1px solid #b0b0b0;
    border-radius: 1px;
    background: #f8f8f8;
`;
const CanvasSvg = styled.svg`
    display: block;
    flex: none;
`;
const SnapRow = styled.div`
    height: 31px;
    flex: none;
    display: flex;
    gap: 3px;
    padding: 2px 0 2px 4px;
`;
const FieldLabel = styled.span`
    width: ${(p) => p.$w}px;
    flex: none;
    color: #909090;
    white-space: nowrap;
`;
const Spin = styled.div`
    width: ${(p) => p.$w}px;
    flex: none;
    height: 22px;
    position: relative;
    display: flex;
    align-items: center;
    justify-content: flex-end;
    padding-right: 13px;
    border: 1px solid #a0a0a0;
    border-top-color: #777;
    background: #f8f8f8;
    color: #999;
`;
const SpinArrows = styled.i`
    position: absolute;
    right: 3px;
    top: 2px;
    width: 5px;
    height: 16px;
    background:
        linear-gradient(45deg, transparent 50%, #555 50%) left top / 2.5px 3px no-repeat,
        linear-gradient(-45deg, transparent 50%, #555 50%) right top / 2.5px 3px no-repeat,
        linear-gradient(135deg, transparent 50%, #888 50%) left bottom / 2.5px 3px no-repeat,
        linear-gradient(-135deg, transparent 50%, #888 50%) right bottom / 2.5px 3px no-repeat;
`;
const CheckBox = styled.span`
    width: 12px;
    height: 12px;
    flex: none;
    border: 1px solid #999;
    background: #fff;
`;
const RotateLabel = styled.span`
    width: 30px;
    flex: none;
    padding-left: 5px;
    font-size: 11px;
    letter-spacing: -0.5px;
    white-space: nowrap;
`;
const Rail = styled.div`
    width: 20px;
    flex: none;
    padding-left: 2px;
    background: #f5f2ee;
`;
const RailTab = styled.div`
    height: 84px;
    writing-mode: vertical-rl;
    font-size: 13.5px;
    line-height: 16px;
    padding-top: 25px;
    border: 1px solid #909090;
    border-right: none;
    background: #f7f7f7;
    overflow: hidden;
    white-space: nowrap;
`;
const StatusBar = styled.div`
    height: 24px;
    flex: none;
    display: flex;
    gap: 2px;
    padding: 0 0 2px 0;
    border-top: 1px solid #fff;
    background: #ececec;
`;
const StatusCell = styled.div`
    width: ${(p) => (p.$w ? `${p.$w}px` : "auto")};
    flex: ${(p) => (p.$grow ? 1 : "none")};
    display: flex;
    align-items: center;
    padding-left: 2px;
    background: ${(p) => (p.$grow ? "#fbfbfb" : "#f2f2f2")};
    border-left: 1px solid #dcdcdc;
    font-family: "Liberation Mono", "Noto Sans CJK SC", monospace;
    font-size: 12px;
    white-space: nowrap;
`;
const Taskbar = styled.div`
    height: 34px;
    flex: none;
    display: flex;
    align-items: center;
    justify-content: space-between;
    padding-left: 12px;
    background: linear-gradient(90deg, #12252f, #152029 50%, #141414 66%, #1a2428);
    color: #fff;
`;
const TaskLeft = styled.div`
    display: flex;
    align-items: center;
`;
const TaskApp = styled.div`
    width: 31px;
    height: 34px;
    margin-left: ${(p) => p.$ml}px;
    display: flex;
    align-items: center;
    justify-content: center;
    border-bottom: 2px solid #6ab4e8;
`;
const Tray = styled.div`
    display: flex;
    align-items: center;
    height: 100%;
    padding-right: 28px;
`;
const TrayIcon = styled.svg`
    margin-left: ${(p) => p.$ml}px;
    flex: none;
`;
const ImeBox = styled.span`
    width: 15px;
    height: 16px;
    display: flex;
    align-items: center;
    justify-content: center;
    background: #fff;
    color: #000;
    font-family: "Liberation Sans", sans-serif;
    font-size: 15px;
`;
const PenSlot = styled.div`
    width: 35px;
    height: 100%;
    margin-left: 7px;
    display: flex;
    align-items: center;
    justify-content: center;
    background: #2a353b;
`;
const TrayText = styled.span`
    width: ${(p) => p.$w}px;
    text-align: center;
    font-size: 15px;
`;
const Badge = styled.span`
    width: 24px;
    height: 26px;
    margin-left: 7px;
    display: flex;
    align-items: center;
    justify-content: center;
    border-radius: 50%;
    background: #12b955;
    color: #fff;
    font-family: "Liberation Sans", sans-serif;
    font-size: 12px;
`;
const Clock = styled.span`
    margin-left: 16px;
    font-family: "Noto Sans", sans-serif;
    font-size: 14px;
`;
